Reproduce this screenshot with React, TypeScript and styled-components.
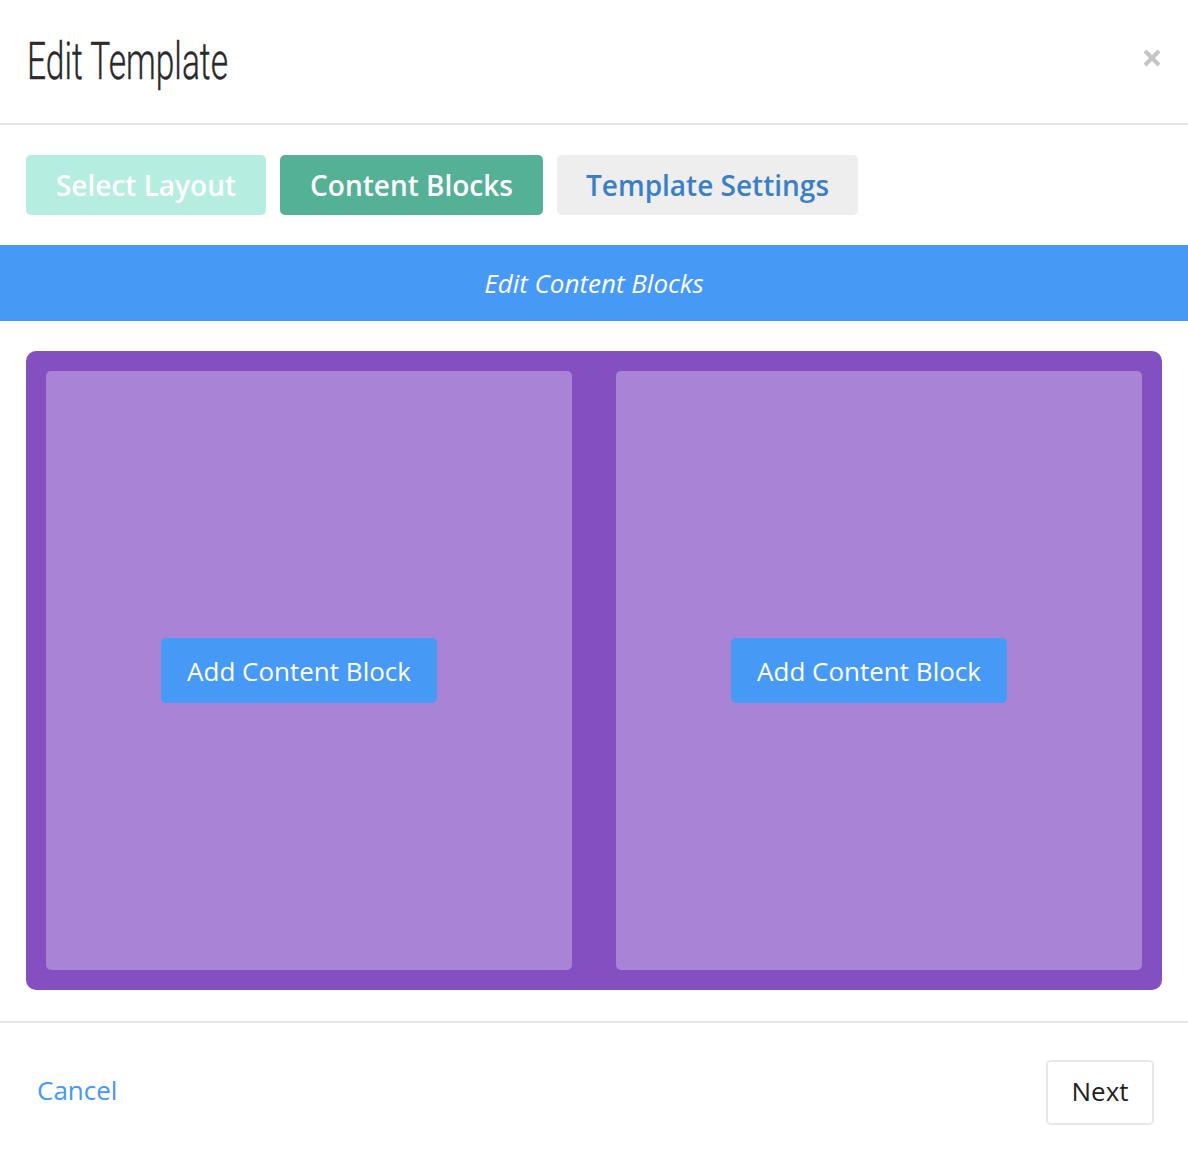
import React from "react";
import styled, { createGlobalStyle } from "styled-components";

const Global = createGlobalStyle`
  html, body { margin: 0; padding: 0; background: #fff; }
  body { font-family: "Open Sans", "Noto Sans", sans-serif; }
  * { box-sizing: border-box; }
`;

const Modal = styled.div`
  width: 1188px;
  height: 1158px;
  display: flex;
  flex-direction: column;
  background: #fff;
`;

const Header = styled.div`
  height: 125px;
  display: flex;
  align-items: center;
  justify-content: space-between;
  padding: 0 26px 0 27px;
  border-bottom: 2px solid #e5e5e5;
`;

const Title = styled.h1`
  margin: 0;
  font-family: Roboto, "DejaVu Sans", sans-serif;
  font-weight: 300;
  font-size: 52px;
  line-height: 1;
  color: #2a2a2a;
  transform: scaleX(0.645);
  transform-origin: left center;
  letter-spacing: 0;
  white-space: nowrap;
  -webkit-text-stroke: 0.4px #2a2a2a;
`;

const Close = styled.button`
  border: none;
  background: none;
  padding: 0;
  width: 20px;
  height: 20px;
  margin-bottom: 8px;
  cursor: pointer;
  display: flex;
  align-items: center;
  justify-content: center;
`;

const Tabs = styled.div`
  display: flex;
  gap: 14px;
  padding: 30px 26px;
`;

const Tab = styled.button<{ $bg: string; $fg: string; $w: number }>`
  width: ${(p) => p.$w}px;
  height: 60px;
  border: none;
  border-radius: 5px;
  background: ${(p) => p.$bg};
  color: ${(p) => p.$fg};
  font-family: "Open Sans", sans-serif;
  font-weight: 600;
  font-size: 28px;
  padding: 0;
  cursor: pointer;
`;

const Banner = styled.div`
  height: 76px;
  background: #4799f6;
  color: #fff;
  font-style: italic;
  font-size: 26px;
  display: flex;
  align-items: center;
  justify-content: center;
`;

const Body = styled.div`
  padding: 30px 26px;
`;

const Canvas = styled.div`
  height: 639px;
  background: #844fc1;
  border-radius: 10px;
  padding: 20px;
  display: grid;
  grid-template-columns: 1fr 1fr;
  gap: 44px;
`;

const Column = styled.div`
  background: #a883d6;
  border-radius: 5px;
  display: flex;
  align-items: center;
  justify-content: center;
`;

const AddButton = styled.button`
  width: 276px;
  height: 65px;
  margin-right: 20px;
  border: none;
  border-radius: 5px;
  background: #4799f6;
  color: #fff;
  font-family: "Open Sans", sans-serif;
  font-size: 26px;
  padding: 0;
  cursor: pointer;
`;

const Footer = styled.div`
  border-top: 2px solid #e5e5e5;
  margin-top: 1px;
  display: flex;
  align-items: center;
  justify-content: space-between;
  padding: 37px 34px 0 37px;
`;

const Cancel = styled.a`
  color: #4399f5;
  font-size: 26px;
  text-decoration: none;
  cursor: pointer;
  margin-top: -5px;
`;

const Next = styled.button`
  width: 108px;
  height: 65px;
  background: #fff;
  border: 2px solid #e8e8e8;
  border-radius: 5px;
  color: #222;
  font-family: "Open Sans", sans-serif;
  font-size: 26px;
  padding: 0 0 4px;
  cursor: pointer;
`;

export default function App() {
  return (
    <>
      <Global />
      <Modal>
        <Header>
          <Title>Edit Template</Title>
          <Close aria-label="Close">
            <svg width="18" height="18" viewBox="0 0 18 18">
              <path d="M2 2 L16 16 M16 2 L2 16" stroke="#c4c4c4" strokeWidth="4" strokeLinecap="butt" />
            </svg>
          </Close>
        </Header>
        <Tabs>
          <Tab $bg="#b5eee0" $fg="#ffffff" $w={240}>Select Layout</Tab>
          <Tab $bg="#54b195" $fg="#ffffff" $w={263}>Content Blocks</Tab>
          <Tab $bg="#eeeeee" $fg="#3b80c6" $w={301}>Template Settings</Tab>
        </Tabs>
        <Banner>Edit Content Blocks</Banner>
        <Body>
          <Canvas>
            <Column>
              <AddButton>Add Content Block</AddButton>
            </Column>
            <Column>
              <AddButton>Add Content Block</AddButton>
            </Column>
          </Canvas>
        </Body>
        <Footer>
          <Cancel>Cancel</Cancel>
          <Next>Next</Next>
        </Footer>
      </Modal>
    </>
  );
}
